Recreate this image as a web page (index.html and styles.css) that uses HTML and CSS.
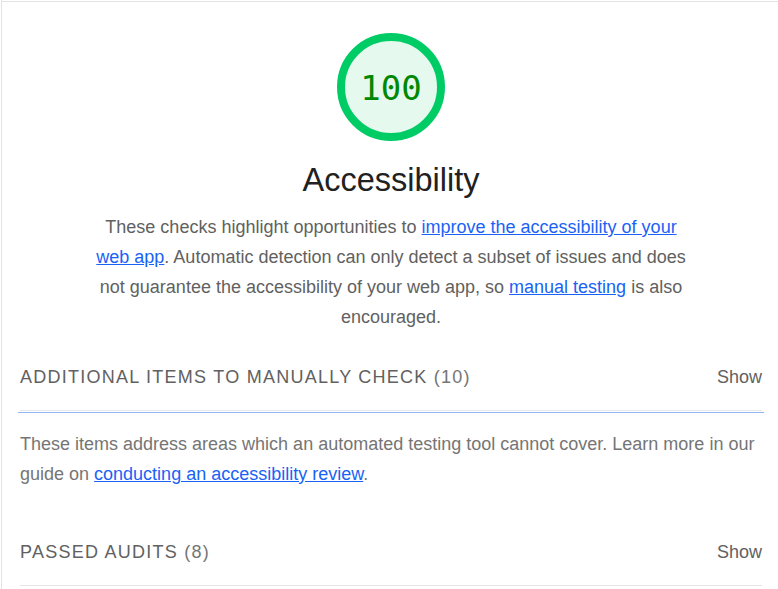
FILE: index.html
```html
<!DOCTYPE html>
<html>
<head>
<meta charset="utf-8">
<link rel="stylesheet" href="styles.css">
</head>
<body>
<div class="frame">
  <div class="content">
    <div class="header">
      <svg class="gauge" width="108" height="108" viewBox="0 0 108 108">
        <circle cx="54" cy="54" r="50" fill="#e5f9ee" stroke="#00cc66" stroke-width="8"/>
      </svg>
      <div class="gauge-score">100</div>
    </div>
    <h1 class="title">Accessibility</h1>
    <p class="intro">These checks highlight opportunities to <a href="#">improve the accessibility of your web app</a>. Automatic detection can only detect a subset of issues and does not guarantee the accessibility of your web app, so <a href="#">manual testing</a> is also encouraged.</p>

    <div class="clump">
      <div class="clump-head">
        <span class="clump-title">Additional items to manually check <span class="count">(10)</span></span>
        <span class="toggle">Show</span>
      </div>
      <div class="focus-line"></div>
      <p class="clump-desc">These items address areas which an automated testing tool cannot cover. Learn more in our guide on <a href="#">conducting an accessibility review</a>.</p>
    </div>

    <div class="clump">
      <div class="clump-head">
        <span class="clump-title">Passed audits <span class="count">(8)</span></span>
        <span class="toggle">Show</span>
      </div>
    </div>
  </div>
</div>
</body>
</html>
```
FILE: styles.css
```css
html, body {
  margin: 0;
  padding: 0;
  background: #fff;
}
body {
  font-family: "Liberation Sans", Arial, sans-serif;
  color: #212121;
  font-size: 18px;
  line-height: 30px;
}
.frame {
  margin-left: 1px;
  border-left: 1px solid #dbe4f4;
  height: 589px;
  overflow: hidden;
}
.content {
  margin-top: 1px;
  border-top: 1px solid #e3e3e3;
  padding: 0 16px 0 18px;
}
.header {
  position: relative;
  width: 108px;
  height: 108px;
  margin: 31px auto 0;
}
.gauge {
  display: block;
}
.gauge-score {
  position: absolute;
  inset: 0;
  display: flex;
  align-items: center;
  justify-content: center;
  font-family: "DejaVu Sans Mono", "Liberation Mono", monospace;
  font-size: 34px;
  color: #008800;
  padding-top: 1px;
}
.title {
  margin: 19px 0 0;
  font-size: 32.5px;
  font-weight: normal;
  line-height: 40px;
  text-align: center;
  color: #212121;
}
.intro {
  margin: 12px auto 0;
  max-width: 600px;
  text-align: center;
  color: #616161;
}
a {
  color: #1a62f5;
  text-decoration: underline;
}
.clump {
  margin-top: 12px;
}
.clump-head {
  display: flex;
  align-items: center;
  justify-content: space-between;
  height: 66px;
  border-bottom: 1px solid #e6e6e6;
}
.clump-title {
  text-transform: uppercase;
  letter-spacing: 1.25px;
  color: #616161;
}
.count {
  color: #757575;
}
.toggle {
  color: #616161;
}
.focus-line {
  height: 1px;
  background: #8fb5f5;
  margin: 1px -2px 0 -2px;
}
.clump-desc {
  margin: 16px 0 0;
  color: #757575;
}
.clump + .clump {
  margin-top: 30px;
}
```
